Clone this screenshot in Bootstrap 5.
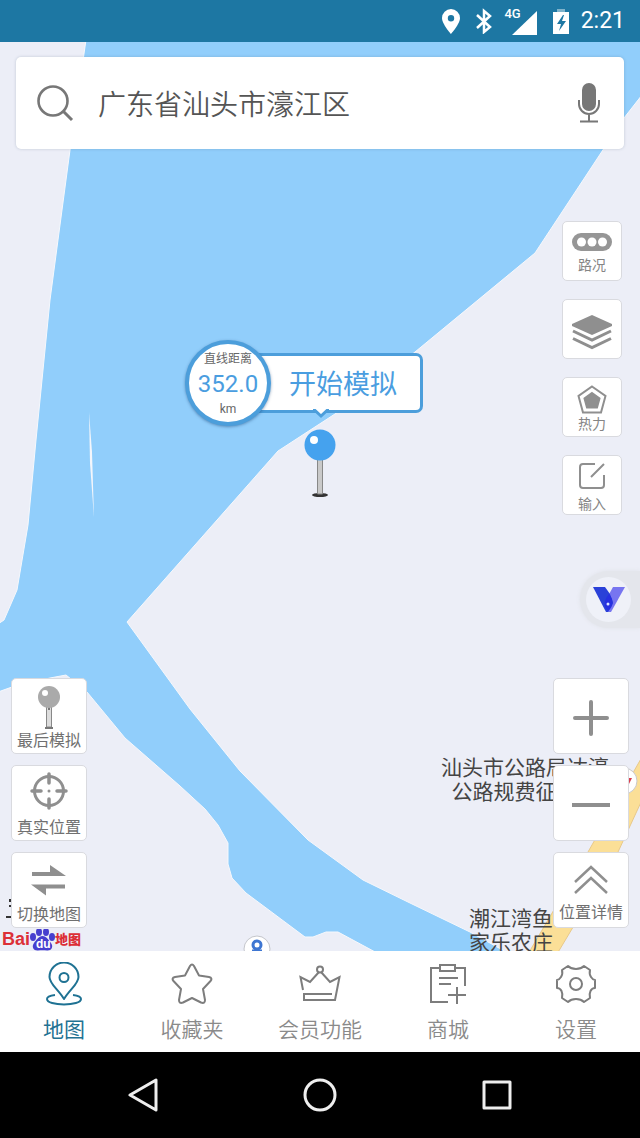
<!DOCTYPE html>
<html lang="zh-CN">
<head>
<meta charset="utf-8">
<meta name="viewport" content="width=device-width, initial-scale=1">
<title>地图</title>
<link href="https://cdn.jsdelivr.net/npm/bootstrap@5.3.0/dist/css/bootstrap.min.css" rel="stylesheet">
<style>
  body { font-family: Roboto, "Noto Sans CJK SC", sans-serif; background: #fff; }
  button { font-family: inherit; }
  svg { display: block; flex: none; }
  .status-bar { height: 42px; background: #1d77a3; padding: 0 15px; font-size: 23px; }
  .net-label { font-size: 13px; line-height: 14px; font-weight: 500; margin-right: -10px; }
  .map-area { background: #eceef7; }
  .map-label { position: absolute; font-size: 21px; line-height: 24px; color: #444; white-space: nowrap; font-family: "Noto Sans CJK SC", sans-serif; }
  .search-box { margin: 15px 16px 0; height: 92px; padding: 0 20px; border-radius: 5px; box-shadow: 0 0 3px rgba(60, 80, 110, .25); }
  .search-box input { font-family: "Noto Sans CJK SC", sans-serif; font-size: 28px; font-weight: 350; color: #555; line-height: 40px; }
  .search-box input:focus { outline: none; }
  .map-btn { background: #fff; border: 1px solid #d9dadf; border-radius: 5px; padding: 0; color: #8f8f8f; display: flex; flex-direction: column; align-items: center; justify-content: center; }
  .map-btn span { color: #707070; font-size: 16px; line-height: 20px; white-space: nowrap; }
  .tool { width: 60px; height: 60px; }
  .tool span { font-size: 14px; color: #858585; }
  .tool { padding-top: 5px; }
  .tile { width: 76px; height: 76px; padding-top: 3px; }
  .left-rail { padding-left: 11px; gap: 11px; }
  .right-rail { padding: 72px 0 23px; }
  .tools { gap: 18px; padding-right: 18px; }
  .zooms { gap: 11px; padding-right: 11px; }
  .assist { width: 60px; height: 57px; margin-top: 56px; padding: 0 6px; border: 0; border-radius: 29px 0 0 29px; background: #e4e6ec; box-shadow: 0 0 4px #e0e2e8; }
  .assist-face { width: 45px; height: 45px; background: #eff1f8; }
  .brand { height: 23px; margin: -11px 0 0 -9px; color: #dc3037; font-size: 18px; line-height: 23px; font-weight: 700; font-family: "Liberation Sans", "Noto Sans CJK SC", sans-serif; }
  .brand b { font-size: 13px; }
  .pin-wrap { position: absolute; left: 50%; bottom: 50%; transform: translateX(-50%); width: 270px; }
  .callout { height: 86px; padding-right: 32px; }
  .dist { width: 86px; height: 86px; border: 4px solid #4c9edb; background: #fff; color: #666; font-size: 12px; line-height: 16px; padding-top: 2px; z-index: 1; box-shadow: 0 1px 3px rgba(30, 70, 120, .5); }
  .dist strong { color: #4a9de0; font-size: 24px; line-height: 34px; font-weight: 400; }
  .start { height: 60px; margin-left: -20px; padding: 0 0 0 12px; border: 3px solid #4c9edb; border-radius: 7px; background: #fff; color: #4a9de0; font-family: "Noto Sans CJK SC", sans-serif; font-size: 27px; line-height: 40px; }
  .start svg { position: absolute; top: 100%; left: 58px; margin-top: -1px; }
  .tabs { height: 101px; padding-top: 11px; }
  .tabs a { color: #8a8a8a; font-size: 21px; font-weight: 350; line-height: 32px; gap: 8px; text-decoration: none; }
  .tabs a.active { color: #1f7293; font-weight: 400; }
  .tabs svg { stroke: #7d7d7d; fill: none; stroke-width: 2; stroke-linejoin: round; }
  .tabs .active svg { stroke: #1f7293; }
  .sys-nav { height: 86px; background: #000; padding: 0 55px; }
  .sys-nav button { background: none; border: 0; padding: 0; }
</style>
</head>
<body class="d-flex flex-column min-vh-100 m-0">

<header class="status-bar d-flex align-items-center justify-content-end text-white">
  <svg width="18" height="26" viewBox="0 0 18 26" fill="#fff"><path fill-rule="evenodd" d="M9 1a9 9 0 0 0-9 9c0 6 9 16 9 16s9-10 9-16a9 9 0 0 0-9-9zm0 6a3.200 3.200 0 1 1 0 6.400A3.200 3.200 0 0 1 9 7z"/></svg>
  <svg class="ms-3" width="16" height="26" viewBox="0 0 16 26" fill="none" stroke="#fff" stroke-width="2.500"><path d="M1 7l13 12-6 5V3l6 5L1 20"/></svg>
  <div class="d-flex align-items-start ms-2 ps-1">
    <span class="net-label">4G</span>
    <svg class="mt-1" width="26" height="24" viewBox="0 0 26 24"><path d="M26 0v24H1z" fill="#fff"/></svg>
  </div>
  <svg class="ms-3" width="16" height="26" viewBox="0 0 16 26"><path d="M4 1h8v4H4z" fill="#7fb3cb"/><path d="M0 4h16v22H0z" fill="#fff"/><path d="M10 7l-6 9h4l-2 7 7-10H9l2-6z" fill="#1d77a3"/></svg>
  <time class="ms-2 ps-1">2:21</time>
</header>

<main class="map-area flex-grow-1 position-relative overflow-hidden d-flex flex-column">
  <svg class="position-absolute top-0 start-0 w-100 h-100" viewBox="0 42 640 909" preserveAspectRatio="xMidYMid slice">
    <path fill="#91cefb" stroke="#f6f8fc" d="M86 40L70 150 50 300 36 440 28 525 17 590 4 620-2 624V692L12 687 50 678 66 675 87 692 125 738 180 786 205 809 218 825 228 843V864L232 878 246 893 305 937 313 937 326 932 338 932 377 953H508L470 932 410 903 363 880 308 840 240 771 190 709 127 622 278 451 338 412 415 352 535 253 624 118 642 95V40z"/>
    <path fill="#f4f6fb" d="M89 412l3 40 2 66-4-55z"/>
    <path fill="#fbdf97" stroke="#e7c88a" d="M642 757L588 852 528 954H557L618 852 642 800z"/>
    <circle cx="624" cy="781" r="13" fill="#fff" stroke="#c9c9c9"/>
    <path d="M628 778l4 0-3 6" fill="#d94050"/>
    <circle cx="257" cy="949" r="13" fill="#fff" stroke="#c4c6cc"/>
    <g fill="none" stroke="#3e76d2" stroke-width="3"><circle cx="257" cy="945" r="4"/><path d="M257 949v6M252 951h10"/></g>
    <path d="M6 917h6M10 899v3M9 906h3" stroke="#333" stroke-width="2"/>
  </svg>
  <div class="map-label text-center" style="right:31px;top:712px">汕头市公路局达濠<br>公路规费征稽所</div>
  <div class="map-label" style="right:87px;top:863px">潮江湾鱼<br>家乐农庄</div>

  <div class="pin-wrap">
    <div class="callout d-flex align-items-center">
      <div class="dist rounded-circle d-flex flex-column align-items-center justify-content-center position-relative flex-shrink-0">
        <span>直线距离</span><strong>352.0</strong><span>km</span>
      </div>
      <button type="button" class="start position-relative flex-grow-1">开始模拟
        <svg width="18" height="10" viewBox="0 0 18 10"><path d="M1 0h16L9 7z" fill="#fff"/><path d="M1 1.500h2L9 7l6-5.500h2" fill="none" stroke="#4c9edb" stroke-width="3"/></svg>
      </button>
    </div>
    <svg class="mx-auto" width="34" height="71" viewBox="0 0 34 71"><ellipse cx="17" cy="69" rx="8" ry="2" fill="#333"/><path d="M14.500 30h5v38h-5z" fill="#c9c9c9" stroke="#888"/><circle cx="17" cy="19" r="15.500" fill="#45a2ee"/><circle cx="11" cy="14" r="4" fill="#fff"/></svg>
  </div>

  <form class="search-box bg-white position-relative d-flex align-items-center" role="search">
    <svg width="38" height="38" viewBox="0 0 38 38" fill="none" stroke="#777" stroke-width="2.600"><circle cx="17" cy="17" r="14.500"/><path d="M27 27l9 9" stroke-width="3"/></svg>
    <input class="border-0 bg-transparent flex-grow-1 ms-4 p-0" type="text" aria-label="搜索地点" value="广东省汕头市濠江区">
    <button type="button" class="border-0 bg-transparent p-0 me-1" aria-label="语音"><svg width="22" height="40" viewBox="0 0 22 40" fill="none" stroke="#777" stroke-width="2"><rect x="5" y="1" width="12" height="26" rx="6" fill="#777"/><path d="M1 17v4a10 10 0 0 0 20 0v-4M11 31v7M2 38.500h18"/></svg></button>
  </form>

  <div class="flex-grow-1 d-flex justify-content-between position-relative pe-none">
    <div class="left-rail d-flex flex-column justify-content-end pe-auto">
      <button type="button" class="map-btn tile"><svg width="24" height="46" viewBox="0 0 24 46"><path d="M9.500 20h5v22h-5z" fill="#ddd" stroke="#888"/><path d="M8 43h8M12 21v4" stroke="#777" stroke-width="2"/><circle cx="12" cy="12" r="11" fill="#aaa"/><circle cx="8" cy="8" r="3" fill="#fff"/></svg><span>最后模拟</span></button>
      <button type="button" class="map-btn tile"><svg class="mb-2" width="38" height="38" viewBox="0 0 38 38" fill="none" stroke="#8f8f8f" stroke-width="3"><circle cx="19" cy="19" r="14.500"/><path stroke-linecap="round" stroke-width="3.500" d="M19 2v9M19 27v9M2 19h9M27 19h9"/><circle cx="19" cy="19" r="1.500" fill="#8f8f8f" stroke="none"/></svg><span>真实位置</span></button>
      <button type="button" class="map-btn tile"><svg class="mb-2 mt-1" width="36" height="34" viewBox="0 0 36 34" fill="#8f8f8f"><path d="M1 9h18V2l16 11H1zM34 25.500H15v7L0 21.500h34z"/></svg><span>切换地图</span></button>
      <div class="brand d-flex align-items-center">Bai<svg width="25" height="22" viewBox="0 0 25 22" fill="#463fcf"><ellipse cx="3" cy="8" rx="3" ry="4"/><ellipse cx="9" cy="3" rx="3" ry="4"/><ellipse cx="16" cy="3" rx="3" ry="4"/><ellipse cx="22" cy="8" rx="3" ry="4"/><path d="M12.500 7c4 0 6 4 8.500 7 3 4 0 8-4 7.500-3-.5-6-.5-9 0C4 22 1 18 4 14c2.500-3 4.500-7 8.500-7z"/><text x="6" y="19" font-size="12" font-weight="700" fill="#fff">du</text></svg><b>地图</b></div>
    </div>
    <div class="right-rail d-flex flex-column align-items-end pe-auto">
      <div class="tools d-flex flex-column">
        <button type="button" class="map-btn tool"><svg class="mb-1" width="40" height="18" viewBox="0 0 40 18"><rect width="40" height="18" rx="9" fill="#969696"/><g fill="#fff"><circle cx="9.500" cy="9" r="4.500"/><circle cx="20" cy="9" r="4.500"/><circle cx="30.500" cy="9" r="4.500"/></g></svg><span>路况</span></button>
        <button type="button" class="map-btn tool" aria-label="图层"><svg width="40" height="36" viewBox="0 0 40 36" fill="#8f8f8f"><path d="M20 1l20 9v2l-20 9L0 12v-2z"/><path fill="none" stroke="#8f8f8f" stroke-width="3" d="M1 17l19 9 19-9M1 24.500l19 9 19-9"/></svg></button>
        <button type="button" class="map-btn tool"><svg width="30" height="29" viewBox="0 0 30 29" fill="none" stroke="#8f8f8f" stroke-width="2"><path d="M15 1.500L28.500 11 24 27.500H6L1.500 11z"/><path d="M15 8l7.500 5.500-2.500 9H10l-2.500-9z" fill="#8f8f8f"/></svg><span>热力</span></button>
        <button type="button" class="map-btn tool"><svg class="mb-1" width="28" height="28" viewBox="0 0 28 28" fill="none" stroke="#8f8f8f" stroke-width="2"><path d="M17 2H5a3 3 0 0 0-3 3v18a3 3 0 0 0 3 3h18a3 3 0 0 0 3-3V13M13 15L26 2"/></svg><span>输入</span></button>
      </div>
      <button type="button" class="assist d-flex align-items-center" aria-label="助手"><span class="assist-face rounded-circle d-flex align-items-center justify-content-center"><svg width="32" height="26" viewBox="0 0 32 26"><path d="M20 0h12L18 25h-5l1-14z" fill="#7775f0"/><path d="M0 0h12l5 7 3 9-5 9h-2z" fill="#2a41d8"/><path d="M16 7c5 6 5 12-1 17-5-5-4-11 1-17z" fill="#2730e0"/><circle cx="15" cy="17" r="1.500" fill="#dce6ff"/></svg></span></button>
      <div class="zooms d-flex flex-column mt-auto">
        <button type="button" class="map-btn tile" aria-label="放大"><svg width="36" height="36" viewBox="0 0 36 36" stroke="#8f8f8f" stroke-width="4" stroke-linecap="round"><path d="M2 18h32M18 2v32"/></svg></button>
        <button type="button" class="map-btn tile" aria-label="缩小"><svg width="38" height="4" viewBox="0 0 38 4" fill="#8f8f8f"><path d="M0 0h38v4H0z"/></svg></button>
        <button type="button" class="map-btn tile"><svg class="mb-2 mt-1" width="34" height="30" viewBox="0 0 34 30" fill="none" stroke="#8f8f8f" stroke-width="2.500"><path d="M1 17L17 2l16 15M1 28l16-15 16 15"/></svg><span>位置详情</span></button>
      </div>
    </div>
  </div>
</main>

<nav class="tabs row g-0 bg-white text-center">
  <a class="col active d-flex flex-column align-items-center" href="#" aria-current="page"><svg width="36" height="44" viewBox="0 0 36 44"><path d="M18 37C12 27 3.500 22 3.500 15a14.500 14.500 0 0 1 29 0C32.500 22 24 27 18 37z"/><circle cx="18" cy="15.500" r="4.500"/><path d="M9 33c-4 .5-8 2-8 4 0 3.500 8 5.500 17 5.500s17-2 17-5.500c0-2-4-3.500-8-4"/></svg>地图</a>
  <a class="col d-flex flex-column align-items-center" href="#"><svg width="42" height="44" viewBox="0 0 42 44"><path d="M19 4q2-3 4 0l5 9.500 10 1.500q4 1 1.500 4L32 27l2 11q0 4-4 2.500L21 36l-9 4.500Q8 42 8 38l2-11-7.500-8Q0 16 4 15l10-1.500z"/></svg>收藏夹</a>
  <a class="col d-flex flex-column align-items-center" href="#"><svg width="42" height="44" viewBox="0 0 42 44"><path stroke-linejoin="miter" d="M4 28L1.500 15 11 20l9-10M22 10l9 10 9.500-5L36 38H5V32h28"/><circle cx="21" cy="7.500" r="3"/></svg>会员功能</a>
  <a class="col d-flex flex-column align-items-center" href="#"><svg width="38" height="44" viewBox="0 0 38 44"><path stroke-linejoin="miter" d="M11 6H2v34h17M27 6h9v18M11 3h15v6H11zM10 16h19M10 22h12M28 25v17M19 33h18"/></svg>商城</a>
  <a class="col d-flex flex-column align-items-center" href="#"><svg width="42" height="44" viewBox="0 0 42 44"><path d="M13 4q3 3 8 3t8-3l6 4q-1 4 1 7t4 3v8q-3 0-4.500 3t-.5 7l-6 4q-3-3-8-3t-8 3l-6-4q1-4-.5-7T2 26v-8q2 0 4-3t1-7z"/><circle cx="21" cy="22" r="6"/></svg>设置</a>
</nav>

<footer class="sys-nav d-flex align-items-center">
  <div class="row g-0 w-100">
    <div class="col d-flex justify-content-center"><button type="button" aria-label="返回"><svg width="30" height="34" viewBox="0 0 30 34" fill="none" stroke="#eee" stroke-width="3" stroke-linejoin="round"><path d="M28 2v30L2 17z"/></svg></button></div>
    <div class="col d-flex justify-content-center"><button type="button" aria-label="主页"><svg width="34" height="34" viewBox="0 0 34 34" fill="none" stroke="#eee" stroke-width="3"><circle cx="17" cy="17" r="15"/></svg></button></div>
    <div class="col d-flex justify-content-center"><button type="button" aria-label="最近任务"><svg width="30" height="34" viewBox="0 0 30 34" fill="none" stroke="#eee" stroke-width="3" stroke-linejoin="round"><path d="M2 4h26v26H2z"/></svg></button></div>
  </div>
</footer>

<script src="https://cdn.jsdelivr.net/npm/bootstrap@5.3.0/dist/js/bootstrap.bundle.min.js"></script>
</body>
</html>
